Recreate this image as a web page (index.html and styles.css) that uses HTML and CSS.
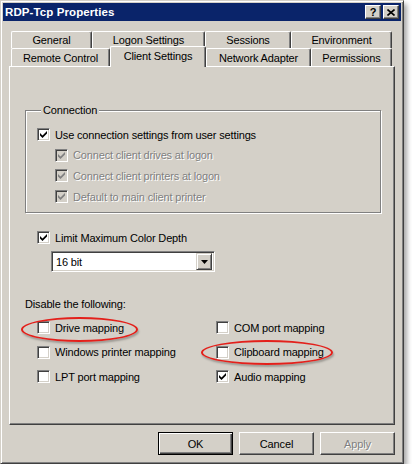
FILE: index.html
```html
<!DOCTYPE html>
<html>
<head>
<meta charset="utf-8">
<link rel="stylesheet" href="styles.css">
</head>
<body>
<div class="window">
  <div class="titlebar">
    <span class="title">RDP-Tcp Properties</span>
    <div class="capbtns">
      <span class="capbtn help">?</span>
      <span class="capbtn close"><svg width="8" height="7" viewBox="0 0 8 7"><path d="M0.5 0.5 L7.5 6.5 M7.5 0.5 L0.5 6.5" stroke="#000" stroke-width="1.6"/></svg></span>
    </div>
  </div>
  <div class="content">
    <div class="tabs">
      <div class="tabrow">
        <span class="tab w81">General</span>
        <span class="tab w113">Logon Settings</span>
        <span class="tab w86">Sessions</span>
        <span class="tab w101">Environment</span>
      </div>
      <div class="tabrow front">
        <span class="tab w99">Remote Control</span>
        <span class="tab w96 selected">Client Settings</span>
        <span class="tab w105">Network Adapter</span>
        <span class="tab w81">Permissions</span>
      </div>
    </div>
    <div class="panel">
      <fieldset class="group">
        <legend>Connection</legend>
        <div class="rows">
          <label class="check"><span class="box"><svg width="7" height="7" viewBox="0 0 7 7"><path d="M0 2 L2.5 4.5 L7 0 L7 2.5 L2.5 7 L0 4.5 Z" fill="#000"/></svg></span><span>Use connection settings from user settings</span></label>
          <label class="check sub disabled"><span class="box"><svg width="7" height="7" viewBox="0 0 7 7"><path d="M0 2 L2.5 4.5 L7 0 L7 2.5 L2.5 7 L0 4.5 Z" fill="#808080"/></svg></span><span>Connect client drives at logon</span></label>
          <label class="check sub disabled"><span class="box"><svg width="7" height="7" viewBox="0 0 7 7"><path d="M0 2 L2.5 4.5 L7 0 L7 2.5 L2.5 7 L0 4.5 Z" fill="#808080"/></svg></span><span>Connect client printers at logon</span></label>
          <label class="check sub disabled"><span class="box"><svg width="7" height="7" viewBox="0 0 7 7"><path d="M0 2 L2.5 4.5 L7 0 L7 2.5 L2.5 7 L0 4.5 Z" fill="#808080"/></svg></span><span>Default to main client printer</span></label>
        </div>
      </fieldset>

      <label class="check limit"><span class="box"><svg width="7" height="7" viewBox="0 0 7 7"><path d="M0 2 L2.5 4.5 L7 0 L7 2.5 L2.5 7 L0 4.5 Z" fill="#000"/></svg></span><span>Limit Maximum Color Depth</span></label>
      <div class="select">
        <span class="value">16 bit</span>
        <span class="drop"><svg width="7" height="4" viewBox="0 0 7 4"><path d="M0 0 L7 0 L3.5 4 Z" fill="#000"/></svg></span>
      </div>

      <div class="disable-label">Disable the following:</div>
      <div class="grid">
        <label class="check"><span class="box"></span><span>Drive mapping</span></label>
        <label class="check"><span class="box"></span><span>COM port mapping</span></label>
        <label class="check"><span class="box"></span><span>Windows printer mapping</span></label>
        <label class="check"><span class="box"></span><span>Clipboard mapping</span></label>
        <label class="check"><span class="box"></span><span>LPT port mapping</span></label>
        <label class="check"><span class="box"><svg width="7" height="7" viewBox="0 0 7 7"><path d="M0 2 L2.5 4.5 L7 0 L7 2.5 L2.5 7 L0 4.5 Z" fill="#000"/></svg></span><span>Audio mapping</span></label>
      </div>
    </div>
    <div class="buttons">
      <span class="btn default">OK</span>
      <span class="btn">Cancel</span>
      <span class="btn disabled">Apply</span>
    </div>
  </div>
  <span class="ring ring-drive"></span>
  <span class="ring ring-clip"></span>
</div>
</body>
</html>
```

FILE: styles.css
```css
* { box-sizing: border-box; }
html, body { margin: 0; padding: 0; background: #fff; }
body {
  font-family: "Liberation Sans", Arial, sans-serif;
  font-size: 11px;
  letter-spacing: -0.15px;
  color: #000;
}
.window {
  position: relative;
  width: 404px;
  height: 464px;
  background: #d4d0c8;
  border: 1px solid;
  border-color: #d4d0c8 #404040 #404040 #d4d0c8;
  box-shadow: inset 1px 1px 0 #fff, inset -1px -1px 0 #808080, 3px 4px 5px rgba(0,0,0,0.35);
  padding: 2px;
}
.titlebar {
  height: 18px;
  background: #0a246a;
  display: flex;
  align-items: center;
  justify-content: space-between;
  padding: 0 2px 0 2px;
}
.title {
  color: #fff;
  font-weight: bold;
  font-size: 11.5px;
  letter-spacing: 0.1px;
}
.capbtns { display: flex; gap: 2px; }
.capbtn {
  width: 16px;
  height: 14px;
  background: #d4d0c8;
  border: 1px solid;
  border-color: #fff #404040 #404040 #fff;
  box-shadow: inset -1px -1px 0 #808080;
  display: flex;
  align-items: center;
  justify-content: center;
  font-weight: bold;
  font-size: 11px;
  line-height: 1;
}
.content {
  padding: 10px 6px 0 6px;
}
.tabs {
  height: 35px;
  padding-left: 2px;
}
.tabrow { display: flex; height: 17px; }
.tabrow.front { height: 18px; }
.tab {
  height: 100%;
  display: flex;
  align-items: center;
  justify-content: center;
  background: #d4d0c8;
  border-left: 1px solid #fff;
  border-top: 1px solid #fff;
  border-right: 1px solid #404040;
  box-shadow: inset -1px 0 0 #808080;
  border-radius: 2px 2px 0 0;
  white-space: nowrap;
}
.tab.selected {
  position: relative;
  z-index: 2;
  top: -2px;
  height: 21px;
  padding-bottom: 3px;
}
.w81 { width: 81px; }
.w113 { width: 113px; }
.w86 { width: 86px; }
.w101 { width: 101px; }
.w99 { width: 99px; }
.w96 { width: 96px; }
.w105 { width: 105px; }

.panel {
  height: 359px;
  border: 1px solid;
  border-color: #fff #404040 #404040 #fff;
  box-shadow: inset -1px -1px 0 #808080;
  padding: 37px 12px 0 15px;
}
.group {
  margin: 0;
  width: 356px;
  border: 1px solid #808080;
  box-shadow: 1px 1px 0 #fff, inset 1px 1px 0 #fff;
  padding: 9px 11px 7px 11px;
}
.group legend {
  padding: 0 2px;
  margin-left: 4px;
  background: #d4d0c8;
  line-height: 13px;
}
.rows { display: flex; flex-direction: column; gap: 3.7px; }
.check {
  display: flex;
  align-items: center;
  gap: 5px;
  height: 17px;
  white-space: nowrap;
}
.box {
  width: 13px;
  height: 13px;
  flex: none;
  background: #fff;
  border: 1px solid;
  border-color: #808080 #fff #fff #808080;
  box-shadow: inset 1px 1px 0 #404040, inset -1px -1px 0 #d4d0c8;
  display: flex;
  align-items: center;
  justify-content: center;
}
.check.sub { margin-left: 18px; }
.check.disabled { color: #808080; }
.check.disabled span:last-child { text-shadow: 1px 1px 0 #fff; }
.check.disabled .box { background: #d4d0c8; }

.check.limit { margin: 16px 0 0 12px; }
.select {
  margin: 5px 0 0 26px;
  width: 164px;
  height: 21px;
  background: #fff;
  border: 1px solid;
  border-color: #808080 #fff #fff #808080;
  box-shadow: inset 1px 1px 0 #404040, inset -1px -1px 0 #d4d0c8;
  display: flex;
  align-items: center;
  justify-content: space-between;
  padding: 2px 2px 2px 4px;
}
.drop {
  width: 16px;
  height: 17px;
  background: #d4d0c8;
  border: 1px solid;
  border-color: #d4d0c8 #404040 #404040 #d4d0c8;
  box-shadow: inset 1px 1px 0 #fff, inset -1px -1px 0 #808080;
  display: flex;
  align-items: center;
  justify-content: center;
}
.disable-label {
  margin-top: 26px;
  line-height: 13px;
}
.grid {
  margin: 8px 0 0 12px;
  display: grid;
  grid-template-columns: 179px 1fr;
  row-gap: 7.5px;
}
.buttons {
  display: flex;
  justify-content: flex-end;
  gap: 6px;
  margin-top: 7px;
}
.btn {
  width: 75px;
  height: 23px;
  display: flex;
  align-items: center;
  justify-content: center;
  border: 1px solid;
  border-color: #fff #404040 #404040 #fff;
  box-shadow: inset -1px -1px 0 #808080;
}
.btn.default {
  border: 1px solid #000;
  box-shadow: inset 1px 1px 0 #fff, inset -1px -1px 0 #404040, inset -2px -2px 0 #808080;
}
.btn.disabled { color: #808080; text-shadow: 1px 1px 0 #fff; }

.ring {
  position: absolute;
  border: 2px solid #e3201b;
  border-radius: 50%;
  box-shadow: 1px 2px 2px rgba(0,0,0,0.25);
}
.ring-drive { left: 20px; top: 316px; width: 117px; height: 25px; }
.ring-clip { left: 200px; top: 339px; width: 132px; height: 25px; }
```
